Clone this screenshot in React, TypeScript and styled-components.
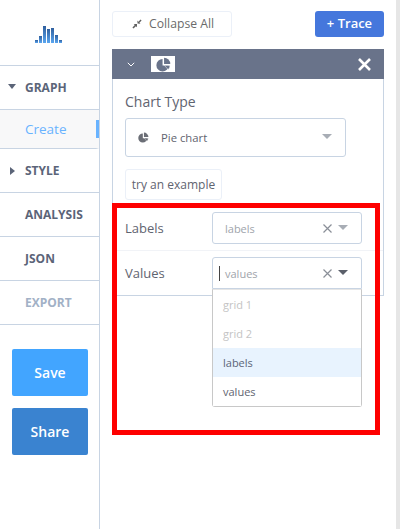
import React from 'react';
import styled, { createGlobalStyle } from 'styled-components';

const GlobalStyle = createGlobalStyle`
  * {
    box-sizing: border-box;
  }
  html,
  body {
    margin: 0;
    padding: 0;
    background: #fff;
    font-family: 'Open Sans', 'Liberation Sans', sans-serif;
  }
`;

const Page = styled.div`
  position: relative;
  display: flex;
  width: 400px;
  height: 529px;
  overflow: hidden;
`;

const Sidebar = styled.div`
  width: 100px;
  flex-shrink: 0;
  border-right: 1px solid #c8d4e3;
`;

const LogoBox = styled.div`
  height: 66px;
  display: flex;
  align-items: flex-start;
  justify-content: center;
  padding-top: 26px;
  padding-right: 1px;
  border-bottom: 1px solid #c8d4e3;
`;

const NavItem = styled.div<{ $muted?: boolean }>`
  height: 44px;
  display: flex;
  align-items: center;
  padding-left: 25px;
  position: relative;
  border-bottom: 1px solid #c8d4e3;
  font-size: 12px;
  font-weight: 700;
  color: ${(p) => (p.$muted ? '#a2b1c6' : '#5b6478')};
`;

const NavArrow = styled.span<{ $open?: boolean }>`
  position: absolute;
  left: ${(p) => (p.$open ? '8px' : '10px')};
  top: 18px;
  width: 0;
  height: 0;
  ${(p) =>
    p.$open
      ? `border-left: 4px solid transparent;
         border-right: 4px solid transparent;
         border-top: 5px solid #5b6478;`
      : `border-top: 4px solid transparent;
         border-bottom: 4px solid transparent;
         border-left: 5px solid #5b6478;`}
`;

const SubItem = styled.div`
  height: 39px;
  display: flex;
  align-items: center;
  padding-left: 25px;
  padding-bottom: 1px;
  background: #f8f8f9;
  border-bottom: 1px solid #c8d4e3;
  border-right: 3px solid transparent;
  font-size: 13.5px;
  color: #69b3ff;
  position: relative;
`;

const ActiveMark = styled.span`
  position: absolute;
  right: -3px;
  top: 10px;
  width: 3px;
  height: 18px;
  background: #69b3ff;
`;

const SideButtons = styled.div`
  display: flex;
  flex-direction: column;
  gap: 12px;
  padding: 24px 0 0 12px;
`;

const SideButton = styled.button<{ $bg: string }>`
  width: 76px;
  height: 47px;
  border: none;
  border-radius: 2px;
  background: ${(p) => p.$bg};
  color: #fff;
  font-family: inherit;
  font-size: 14px;
  font-weight: 600;
`;

const Main = styled.div`
  flex: 1;
  padding: 11px 12px 0 12px;
`;

const Toolbar = styled.div`
  display: flex;
  justify-content: space-between;
  height: 26px;
`;

const CollapseButton = styled.button`
  width: 120px;
  height: 26px;
  display: flex;
  align-items: center;
  justify-content: flex-start;
  gap: 7px;
  padding: 0 0 1px 19px;
  background: #fff;
  border: 1px solid #ebf0f8;
  border-radius: 3px;
  font-family: inherit;
  font-size: 12.2px;
  color: #6b6b6b;
`;

const TraceButton = styled.button`
  width: 69px;
  height: 26px;
  padding: 0 0 2px;
  background: #4577dc;
  border: none;
  border-radius: 3px;
  font-family: inherit;
  font-size: 13px;
  font-weight: 600;
  color: #fff;
`;

const TracePanel = styled.div`
  margin-top: 12px;
  height: 247px;
  border: 1px solid #c8d4e3;
  border-top: none;
`;

const PanelHeader = styled.div`
  height: 30px;
  margin: 0 -1px;
  display: flex;
  align-items: center;
  padding: 0 13px 0 15px;
  background: #69738a;
`;

const IconChip = styled.span`
  width: 24px;
  height: 16px;
  margin-left: 16px;
  background: #fff;
  display: flex;
  align-items: center;
  justify-content: center;
`;

const CloseIcon = styled.svg`
  margin-left: auto;
`;

const PanelBody = styled.div`
  padding: 13px 12px 0 12px;
`;

const SectionLabel = styled.div`
  font-size: 14px;
  line-height: 19px;
  color: #5f6470;
`;

const ChartSelect = styled.div`
  width: 221px;
  height: 39px;
  margin-top: 7px;
  display: flex;
  align-items: center;
  padding: 0 13px 0 12px;
  border: 1px solid #c8d4e3;
  border-radius: 3px;
  font-size: 11.3px;
  color: #5f6470;
`;

const ChartName = styled.span`
  margin-left: 12px;
`;

const ExampleButton = styled.button`
  display: block;
  width: 97px;
  height: 31px;
  margin-top: 12px;
  margin-bottom: 2px;
  padding: 0;
  background: #fff;
  border: 1px solid #ebf0f8;
  border-radius: 3px;
  font-family: inherit;
  font-size: 12px;
  color: #5f6470;
`;

const FieldRow = styled.div<{ $last?: boolean }>`
  display: flex;
  align-items: flex-start;
  margin: 0 -12px;
  padding: ${(p) => (p.$last ? '6px 21px 0 12px' : '10px 21px 6px 12px')};
  border-bottom: ${(p) => (p.$last ? 'none' : '1px solid #f1f3f7')};
`;

const FieldLabel = styled.div`
  width: 87px;
  font-size: 13px;
  line-height: 32px;
  color: #5f6470;
`;

const FieldSelect = styled.div<{ $active?: boolean }>`
  position: relative;
  width: 150px;
  height: 32px;
  display: flex;
  align-items: center;
  padding: 0 13px 0 12px;
  border: 1px solid #c8d4e3;
  border-radius: 3px;
  border-bottom-left-radius: ${(p) => (p.$active ? '0' : '3px')};
  border-bottom-right-radius: ${(p) => (p.$active ? '0' : '3px')};
  font-size: 11px;
  color: #a0a4ab;
`;

const Caret = styled.span`
  width: 1px;
  height: 15px;
  margin: 1px 5px 0 -6px;
  background: #444;
`;

const Clear = styled.svg`
  margin-left: auto;
`;

const DownArrow = styled.span<{ $dark?: boolean; $large?: boolean }>`
  margin-left: ${(p) => (p.$large ? 'auto' : '6px')};
  width: 0;
  height: 0;
  border-left: 5px solid transparent;
  border-right: 5px solid transparent;
  border-top: 5px solid ${(p) => (p.$dark ? '#5a5f6a' : '#a8adb5')};
  margin-bottom: 2px;
`;

const Menu = styled.div`
  position: absolute;
  left: -1px;
  right: -1px;
  top: 31px;
  height: 118px;
  background: #fff;
  border: 1px solid #c8c8c8;
  border-top-color: #e6e6e6;
  border-radius: 0 0 3px 3px;
`;

const MenuItem = styled.div<{ $disabled?: boolean; $selected?: boolean }>`
  height: 29px;
  display: flex;
  align-items: center;
  padding-left: 10px;
  font-size: 11px;
  background: ${(p) => (p.$selected ? '#e8f3fe' : '#fff')};
  color: ${(p) => (p.$disabled ? '#c4c4c4' : p.$selected ? '#5b6478' : '#5f6470')};
`;

const Gutter = styled.div`
  width: 4px;
  flex-shrink: 0;
  background: #e6e6e6;
`;

const Annotation = styled.div`
  position: absolute;
  left: 112px;
  top: 203px;
  width: 268px;
  height: 232px;
  border: 5px solid #fe0000;
  pointer-events: none;
`;

function Logo() {
  const bars = [
    [0, 40, 3],
    [4, 36, 7],
    [8, 26, 17],
    [12, 29, 14],
    [16, 28, 15],
    [20, 35, 8],
    [24, 40, 3],
  ];
  return (
    <svg width="28" height="18" viewBox="0 26 28 18">
      <defs>
        <linearGradient id="logo-bars" x1="0" y1="0" x2="0" y2="1">
          <stop offset="0" stopColor="#2f5f9e" />
          <stop offset="1" stopColor="#5aa6f0" />
        </linearGradient>
      </defs>
      {bars.map(([x, y, h]) => (
        <rect key={x} x={x} y={y} width="3" height={h} fill="url(#logo-bars)" />
      ))}
    </svg>
  );
}

function CollapseIcon() {
  return (
    <svg width="10" height="10" viewBox="0 0 12 12" fill="#5f5f5f">
      <path d="M0.5 10.2 L3.4 7.3 L2 6 L6 5.9 L5.9 10 L4.6 8.6 L1.8 11.5 Z" />
      <path d="M11.5 1.8 L8.9 4.4 L10.2 5.6 L6.6 5.4 L6.5 1.8 L7.8 3.2 L10.2 0.5 Z" />
    </svg>
  );
}

function PieIcon({ size, color, gap }: { size: number; color: string; gap: string }) {
  return (
    <svg width={size} height={size} viewBox="0 0 16 16">
      <path d="M7 2.2 A6.6 6.6 0 1 0 13.6 9 L7 9 Z" fill={color} />
      <path d="M8.6 0.8 A6.6 6.6 0 0 1 15.2 7.4 L8.6 7.4 Z" fill={color} />
      <path d="M9 9 L15 9 A7 7 0 0 1 13 13.4 Z" fill={color} stroke={gap} strokeWidth="0.5" />
    </svg>
  );
}

function ClearIcon() {
  return (
    <Clear width="9" height="9" viewBox="0 0 9 9" stroke="#8a8f98" strokeWidth="1.2">
      <path d="M0.5 0.5 L8.5 8.5 M8.5 0.5 L0.5 8.5" />
    </Clear>
  );
}

export default function App() {
  return (
    <Page>
      <GlobalStyle />
      <Sidebar>
        <LogoBox>
          <Logo />
        </LogoBox>
        <NavItem>
          <NavArrow $open />
          GRAPH
        </NavItem>
        <SubItem>
          Create
          <ActiveMark />
        </SubItem>
        <NavItem>
          <NavArrow />
          STYLE
        </NavItem>
        <NavItem>ANALYSIS</NavItem>
        <NavItem>JSON</NavItem>
        <NavItem $muted>EXPORT</NavItem>
        <SideButtons>
          <SideButton $bg="#42a5ff">Save</SideButton>
          <SideButton $bg="#3a83d0">Share</SideButton>
        </SideButtons>
      </Sidebar>
      <Main>
        <Toolbar>
          <CollapseButton>
            <CollapseIcon />
            Collapse All
          </CollapseButton>
          <TraceButton>+ Trace</TraceButton>
        </Toolbar>
        <TracePanel>
          <PanelHeader>
            <svg width="8" height="5" viewBox="0 0 8 5" fill="none" stroke="#fff" strokeWidth="1">
              <path d="M0.8 0.8 L4 4 L7.2 0.8" />
            </svg>
            <IconChip>
              <PieIcon size={15} color="#69738a" gap="#fff" />
            </IconChip>
            <CloseIcon width="13" height="13" viewBox="0 0 13 13" stroke="#fff" strokeWidth="2.6">
              <path d="M1 1 L12 12 M12 1 L1 12" />
            </CloseIcon>
          </PanelHeader>
          <PanelBody>
            <SectionLabel>Chart Type</SectionLabel>
            <ChartSelect>
              <PieIcon size={11} color="#6b6e76" gap="#fff" />
              <ChartName>Pie chart</ChartName>
              <DownArrow $large />
            </ChartSelect>
            <ExampleButton>try an example</ExampleButton>
            <FieldRow>
              <FieldLabel>Labels</FieldLabel>
              <FieldSelect>
                labels
                <ClearIcon />
                <DownArrow />
              </FieldSelect>
            </FieldRow>
            <FieldRow $last>
              <FieldLabel>Values</FieldLabel>
              <FieldSelect $active>
                <Caret />
                values
                <ClearIcon />
                <DownArrow $dark />
                <Menu>
                  <MenuItem $disabled>grid 1</MenuItem>
                  <MenuItem $disabled>grid 2</MenuItem>
                  <MenuItem $selected>labels</MenuItem>
                  <MenuItem>values</MenuItem>
                </Menu>
              </FieldSelect>
            </FieldRow>
          </PanelBody>
        </TracePanel>
      </Main>
      <Gutter />
      <Annotation />
    </Page>
  );
}
